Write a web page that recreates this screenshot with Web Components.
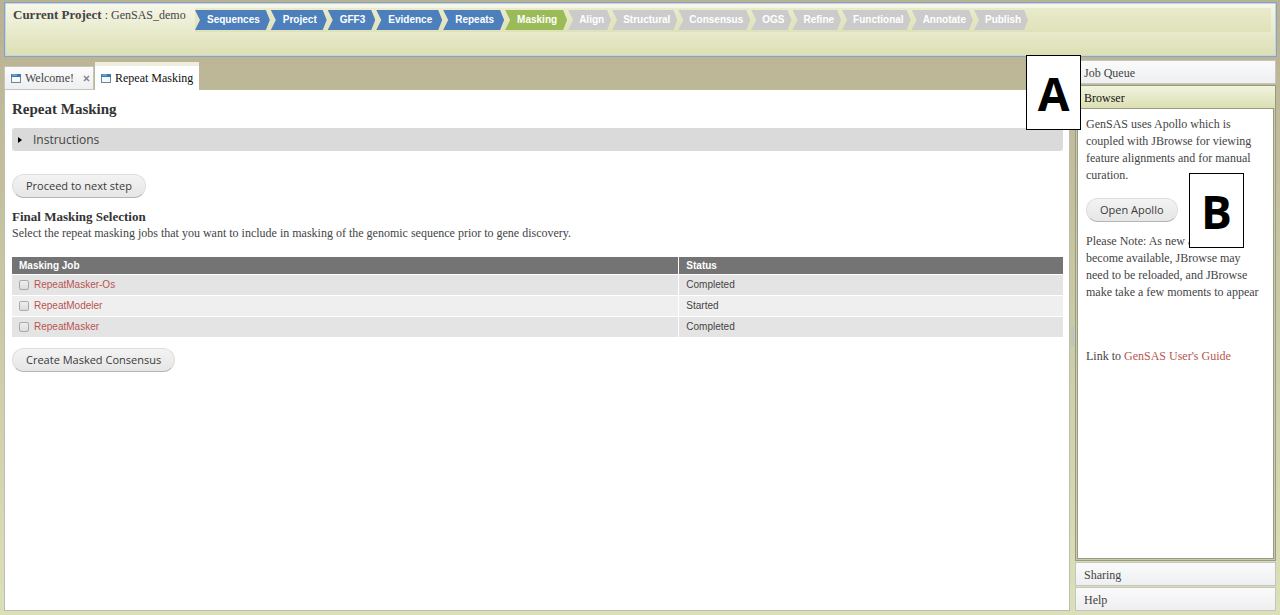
<!DOCTYPE html>
<html lang="en">
<head>
<meta charset="utf-8">
<title>GenSAS - Repeat Masking</title>
<style>
  body {
    margin: 0;
    font: 12px/17px "Liberation Serif", serif;
    color: #444;
    background: linear-gradient(#b8b193, #dce0b8) fixed;
  }
</style>
</head>
<body>
<gensas-app></gensas-app>

<script>
customElements.define(
  "pill-button",
  class extends HTMLElement {
    constructor() {
      super();
      this.attachShadow({ mode: "open" }).innerHTML = `
        <style>
          :host { display: block; }
          button {
            display: block;
            height: 24px;
            padding: 0 13px;
            border: 1px solid #ddd;
            border-bottom-color: #b4b4b4;
            border-radius: 12px;
            background: linear-gradient(#f3f3f3, #e6e6e6);
            color: #3a3a3a;
            font: 11px/20px "Open Sans", sans-serif;
            cursor: pointer;
          }
        </style>
        <button type="button"><slot></slot></button>`;
    }
  }
);

customElements.define(
  "step-bar",
  class extends HTMLElement {
    constructor() {
      super();
      const steps = ["Sequences", "Project", "GFF3", "Evidence", "Repeats", "Masking", "Align",
        "Structural", "Consensus", "OGS", "Refine", "Functional", "Annotate", "Publish"];
      const current = steps.indexOf("Masking");
      const items = steps.map((name, i) => {
        const state = i < current ? "done" : i === current ? "current" : "todo";
        return `<li><a href="#${name}" class="${state}">${name}</a></li>`;
      }).join("");
      this.attachShadow({ mode: "open" }).innerHTML = `
        <style>
          :host { display: block; }
          ol {
            display: flex;
            gap: 1px;
            margin: 0;
            padding: 2px 0;
            list-style: none;
            background: linear-gradient(#e9ebcb, #dfe2b9);
          }
          a {
            display: block;
            padding: 0 10px 0 12px;
            clip-path: polygon(0 0, calc(100% - 4px) 0, 100% 50%, calc(100% - 4px) 100%, 0 100%, 5px 50%);
            color: #fff;
            font: bold 10px/20px "Liberation Sans", sans-serif;
            text-decoration: none;
          }
          .done { background: #4c7fbc; }
          .current { background: #9bbb59; }
          .todo { padding: 0 7px 0 11px; background: #cbcbcb; }
        </style>
        <ol>${items}</ol>`;
    }
  }
);

customElements.define(
  "project-header",
  class extends HTMLElement {
    constructor() {
      super();
      this.attachShadow({ mode: "open" }).innerHTML = `
        <style>
          :host {
            display: flex;
            gap: 8px;
            min-height: 55px;
            padding: 5px 5px 5px 8px;
            border: 1px solid #87a3bd;
            box-shadow: inset 0 0 0 1px #c5d5e0;
            background: linear-gradient(#f6f7ea, #dcdfb2);
          }
          .project { white-space: nowrap; min-width: 174px; margin-top: -2px; }
          strong { font-size: 13px; }
          step-bar { flex: 1; }
        </style>
        <div class="project"><strong>Current Project</strong> : <slot></slot></div>
        <step-bar></step-bar>`;
    }
  }
);

customElements.define(
  "page-tab",
  class extends HTMLElement {
    constructor() {
      super();
      const close = this.hasAttribute("closable") ? `<button class="close" type="button" aria-label="Close">
        <svg width="7" height="7" viewBox="0 0 7 7"><path d="M1 1L6 6M6 1L1 6" stroke="#7d868c" stroke-width="1.5"/></svg></button>` : "";
      this.attachShadow({ mode: "open" }).innerHTML = `
        <style>
          :host {
            display: flex;
            align-items: center;
            box-sizing: border-box;
            height: 24px;
            padding: 0 3px 0 6px;
            border: 1px solid #c3c4bb;
            background: linear-gradient(#fbfbfb, #eeeff0);
          }
          :host([selected]) {
            height: 28px;
            padding-right: 6px;
            border: 0;
            border-top: 4px solid #eceede;
            background: #fff;
            color: #111;
          }
          button {
            display: flex;
            align-items: center;
            gap: 4px;
            padding: 0;
            border: 0;
            background: none;
            color: inherit;
            font: inherit;
          }
          .close { margin-left: 9px; }
        </style>
        <button type="button" role="tab">
          <svg width="10" height="9" viewBox="0 0 10 9">
            <rect x=".5" y=".5" width="9" height="8" fill="#f5f9fc" stroke="#6d8798"/>
            <rect x="0" y="0" width="10" height="3" fill="#397bad"/>
            <path d="M1 1h5" stroke="#8fc2e6"/>
          </svg>
          <slot></slot>
        </button>${close}`;
    }
  }
);

customElements.define(
  "masking-table",
  class extends HTMLElement {
    constructor() {
      super();
      const jobs = [
        ["RepeatMasker-Os", "Completed"],
        ["RepeatModeler", "Started"],
        ["RepeatMasker", "Completed"],
      ];
      const rows = jobs.map(([job, status]) => `
        <tr>
          <td><div class="job"><input type="checkbox" aria-label="${job}"><a href="#${job}">${job}</a></div></td>
          <td>${status}</td>
        </tr>`).join("");
      this.attachShadow({ mode: "open" }).innerHTML = `
        <style>
          :host { display: block; }
          table {
            width: 100%;
            border-collapse: separate;
            border-spacing: 0;
            table-layout: fixed;
            font: 10px/20px "Liberation Sans", sans-serif;
          }
          th, td {
            box-sizing: border-box;
            padding: 0 7px;
            border-bottom: 1px solid #fff;
            text-align: left;
          }
          th {
            background: #747474;
            color: #fff;
            line-height: 17px;
          }
          th:first-child { width: 63.4%; }
          th + th, td + td { border-left: 1px solid #fff; }
          tr { background: #efefef; }
          tbody tr:nth-child(odd) { background: #e4e4e4; }
          .job { display: flex; align-items: center; gap: 5px; }
          input {
            appearance: none;
            box-sizing: border-box;
            width: 10px;
            height: 10px;
            margin: 0;
            border: 1px solid #a9a9a9;
            border-radius: 2px;
            background: linear-gradient(#eee, #dcdcdc);
          }
          a { color: #b85450; text-decoration: none; }
        </style>
        <table>
          <thead><tr><th>Masking Job</th><th>Status</th></tr></thead>
          <tbody>${rows}</tbody>
        </table>`;
    }
  }
);

customElements.define(
  "masking-page",
  class extends HTMLElement {
    constructor() {
      super();
      this.attachShadow({ mode: "open" }).innerHTML = `
        <style>
          :host {
            display: block;
            padding: 11px 6px 11px 7px;
            border: 1px solid #bdbfae;
            border-top: 0;
            background: #fff;
          }
          h2 { margin: 0 0 10px; font-size: 15px; line-height: 17px; color: #333; }
          h3 { margin: 0; font-size: 13px; line-height: 17px; color: #333; }
          p { margin: 0; }
          summary {
            display: flex;
            align-items: center;
            gap: 11px;
            height: 23px;
            padding-left: 6px;
            border-radius: 3px;
            background: #dadada;
            font: 12px/23px "Open Sans", sans-serif;
          }
          .next { margin: 23px 0 10px; }
          masking-table { margin: 15px 0 10px; }
        </style>
        <h2>Repeat Masking</h2>
        <details>
          <summary>
            <svg width="4" height="6" viewBox="0 0 4 6"><path d="M0 0L4 3L0 6z" fill="#000"/></svg>
            Instructions
          </summary>
        </details>
        <pill-button class="next">Proceed to next step</pill-button>
        <h3>Final Masking Selection</h3>
        <p>Select the repeat masking jobs that you want to include in masking of the genomic sequence prior to gene discovery.</p>
        <masking-table></masking-table>
        <pill-button>Create Masked Consensus</pill-button>`;
    }
  }
);

customElements.define(
  "side-panel",
  class extends HTMLElement {
    constructor() {
      super();
      this.attachShadow({ mode: "open" }).innerHTML = `
        <style>
          :host {
            display: flex;
            flex-direction: column;
            border: 1px solid #c4c6bf;
          }
          :host([open]) {
            flex: 1;
            border-color: #989b80;
            background: #c9ccae;
          }
          button {
            height: 22px;
            padding: 2px 8px 0;
            border: 0;
            background: linear-gradient(#fafafa, #eeeff1);
            color: #444;
            font: inherit;
            text-align: left;
          }
          :host([open]) button {
            background: linear-gradient(#f1f3df, #dcdfb3);
            color: #111;
          }
          .body { display: none; }
          :host([open]) .body {
            display: block;
            flex: 1;
            margin: 0 1px 1px;
            padding: 7px 8px;
            border: 1px solid #989b80;
            background: #fff;
          }
        </style>
        <button type="button"></button>
        <div class="body"><slot></slot></div>`;
      this.shadowRoot.querySelector("button").textContent = this.getAttribute("label");
    }
  }
);

// boxed letter that points out a part of the page
customElements.define(
  "callout-mark",
  class extends HTMLElement {
    constructor() {
      super();
      this.attachShadow({ mode: "open" }).innerHTML = `
        <style>
          :host {
            position: absolute;
            display: flex;
            align-items: center;
            justify-content: center;
            box-sizing: border-box;
            width: 55px;
            height: 75px;
            border: 1px solid #000;
            background: #fff;
            color: #000;
            font: bold 46px/46px "Open Sans", sans-serif;
          }
        </style>
        <slot></slot>`;
    }
  }
);

customElements.define(
  "gensas-app",
  class extends HTMLElement {
    constructor() {
      super();
      this.attachShadow({ mode: "open" }).innerHTML = `
        <style>
          :host {
            position: relative;
            display: flex;
            flex-direction: column;
            box-sizing: border-box;
            min-height: 100vh;
            padding: 2px 4px 4px;
          }
          project-header { box-sizing: border-box; margin-right: -1px; }
          .work { display: flex; flex: 1; margin-top: 3px; }
          main { display: flex; flex-direction: column; flex: 1; min-width: 0; }
          .tabs { display: flex; align-items: flex-end; gap: 1px; height: 30px; }
          masking-page { flex: 1; }
          .splitter { display: flex; align-items: center; width: 5px; }
          .splitter i { width: 3px; height: 20px; margin-left: 1px; background: #bfc3bb; }
          aside { display: flex; flex-direction: column; gap: 1px; width: 201px; }
          p { margin: 0 0 14px; }
          pill-button { margin-bottom: 11px; }
          .guide { margin-top: 47px; }
          a { color: #b85450; text-decoration: none; }
          .mark-a { top: 55px; right: 199px; }
          .mark-b { top: 173px; right: 36px; }
        </style>
        <project-header>GenSAS_demo</project-header>
        <div class="work">
          <main>
            <div class="tabs" role="tablist">
              <page-tab closable>Welcome!</page-tab>
              <page-tab selected>Repeat Masking</page-tab>
            </div>
            <masking-page></masking-page>
          </main>
          <div class="splitter"><i></i></div>
          <aside>
            <side-panel label="Job Queue"></side-panel>
            <side-panel label="Browser" open>
              <p>GenSAS uses Apollo which is<br>coupled with JBrowse for viewing<br>feature alignments and for manual<br>curation.</p>
              <pill-button>Open Apollo</pill-button>
              <p>Please Note: As new a<br>become available, JBrowse may<br>need to be reloaded, and JBrowse<br>make take a few moments to appear</p>
              <p class="guide">Link to <a href="#guide">GenSAS User's Guide</a></p>
            </side-panel>
            <side-panel label="Sharing"></side-panel>
            <side-panel label="Help"></side-panel>
          </aside>
        </div>
        <callout-mark class="mark-a">A</callout-mark>
        <callout-mark class="mark-b">B</callout-mark>`;
    }
  }
);
</script>
</body>
</html>
